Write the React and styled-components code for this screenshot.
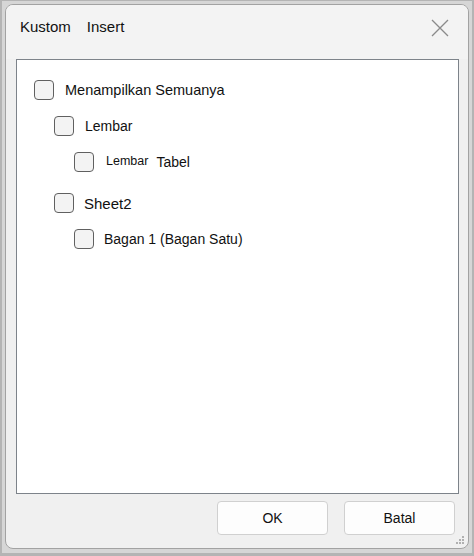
import styled, { createGlobalStyle } from 'styled-components'

const Global = createGlobalStyle`
  html, body { margin: 0; padding: 0; }
  body {
    width: 474px;
    height: 556px;
    overflow: hidden;
    background: #b4b4b4;
    font-family: 'Liberation Sans', Arial, sans-serif;
  }
`

const Frame = styled.div`
  box-sizing: border-box;
  width: 474px;
  height: 556px;
  padding: 1px 2px 3px 2px;
`

const Halo = styled.div`
  box-sizing: border-box;
  height: 100%;
  background: #d6d6d6;
  padding: 3px 3px 4px 3px;
`

const Dialog = styled.div`
  box-sizing: border-box;
  height: 100%;
  border: 1px solid #a2a2a2;
  border-radius: 8px;
  background: #f0f0f0;
  display: flex;
  flex-direction: column;
  position: relative;
  overflow: hidden;
`

const TitleBar = styled.div`
  height: 54px;
  display: flex;
  align-items: center;
  padding: 0 14px 0 14px;
  background: #f3f3f3;
`

const Tab = styled.span`
  font-size: 15px;
  color: #111;
  margin-right: 16px;
  padding-bottom: 11px;
`

const Close = styled.button`
  margin-left: auto;
  border: 0;
  background: transparent;
  padding: 0;
  width: 20px;
  height: 20px;
  margin-bottom: 9px;
  margin-right: 4px;
  display: flex;
  align-items: center;
  justify-content: center;
`

const ListBox = styled.div`
  margin: 0 9px 0 10px;
  height: 435px;
  box-sizing: border-box;
  border: 1px solid #7d838a;
  background: #fff;
  padding: 20px 0 0 17px;
`

const Row = styled.div`
  display: flex;
  align-items: center;
  height: 20px;
  margin-left: ${p => p.$level * 20}px;
  margin-bottom: ${p => p.$gap}px;
`

const Box = styled.span`
  box-sizing: border-box;
  width: 20px;
  height: 20px;
  border: 1px solid #606060;
  border-radius: 4px;
  background: #f3f3f3;
  flex: none;
`

const Label = styled.span`
  margin-left: ${p => p.$gap}px;
  font-size: ${p => p.$size}px;
  color: #111;
  white-space: nowrap;
  display: inline-flex;
  align-items: baseline;
`

const Part = styled.span`
  font-size: ${p => p.$size}px;
  margin-right: ${p => p.$gap || 0}px;
  position: relative;
  top: ${p => p.$lift || 0}px;
`

const Footer = styled.div`
  flex: 1;
  display: flex;
  justify-content: flex-end;
  align-items: flex-start;
  gap: 16px;
  padding: 7px 13px 0 0;
`

const Button = styled.button`
  width: 111px;
  height: 34px;
  box-sizing: border-box;
  border: 1px solid #d0d0d0;
  border-radius: 4px;
  background: #fdfdfd;
  font-family: 'Liberation Sans', Arial, sans-serif;
  font-size: 14px;
  color: #111;
`

const Grip = styled.svg`
  position: absolute;
  right: 3px;
  bottom: 3px;
`

function Check({ level, gap = 16, children }) {
  return (
    <Row $level={level} $gap={gap}>
      <Box />
      {children}
    </Row>
  )
}

export default function App() {
  return (
    <>
      <Global />
      <Frame>
        <Halo>
          <Dialog>
            <TitleBar>
              <Tab>Kustom</Tab>
              <Tab>Insert</Tab>
              <Close aria-label="Tutup">
                <svg width="18" height="18" viewBox="0 0 18 18">
                  <path d="M1 1L17 17M17 1L1 17" stroke="#8a8a8a" strokeWidth="1.3" fill="none" />
                </svg>
              </Close>
            </TitleBar>
            <ListBox>
              <Check level={0}>
                <Label $gap={11} $size={14.5}>Menampilkan Semuanya</Label>
              </Check>
              <Check level={1}>
                <Label $gap={11} $size={14}>Lembar</Label>
              </Check>
              <Check level={2} gap={21}>
                <Label $gap={12} $size={14}>
                  <Part $size={12.5} $gap={8} $lift={-2}>Lembar</Part>
                  <Part $size={14}>Tabel</Part>
                </Label>
              </Check>
              <Check level={1}>
                <Label $gap={10} $size={15}>Sheet2</Label>
              </Check>
              <Check level={2}>
                <Label $gap={10} $size={14}>Bagan 1 (Bagan Satu)</Label>
              </Check>
            </ListBox>
            <Footer>
              <Button>OK</Button>
              <Button>Batal</Button>
            </Footer>
            <Grip width="10" height="10" viewBox="0 0 10 10">
              <rect x="7" y="1" width="2" height="2" fill="#b0b0b0" />
              <rect x="4" y="4" width="2" height="2" fill="#b0b0b0" />
              <rect x="7" y="4" width="2" height="2" fill="#b0b0b0" />
              <rect x="1" y="7" width="2" height="2" fill="#b0b0b0" />
              <rect x="4" y="7" width="2" height="2" fill="#b0b0b0" />
              <rect x="7" y="7" width="2" height="2" fill="#b0b0b0" />
            </Grip>
          </Dialog>
        </Halo>
      </Frame>
    </>
  )
}
